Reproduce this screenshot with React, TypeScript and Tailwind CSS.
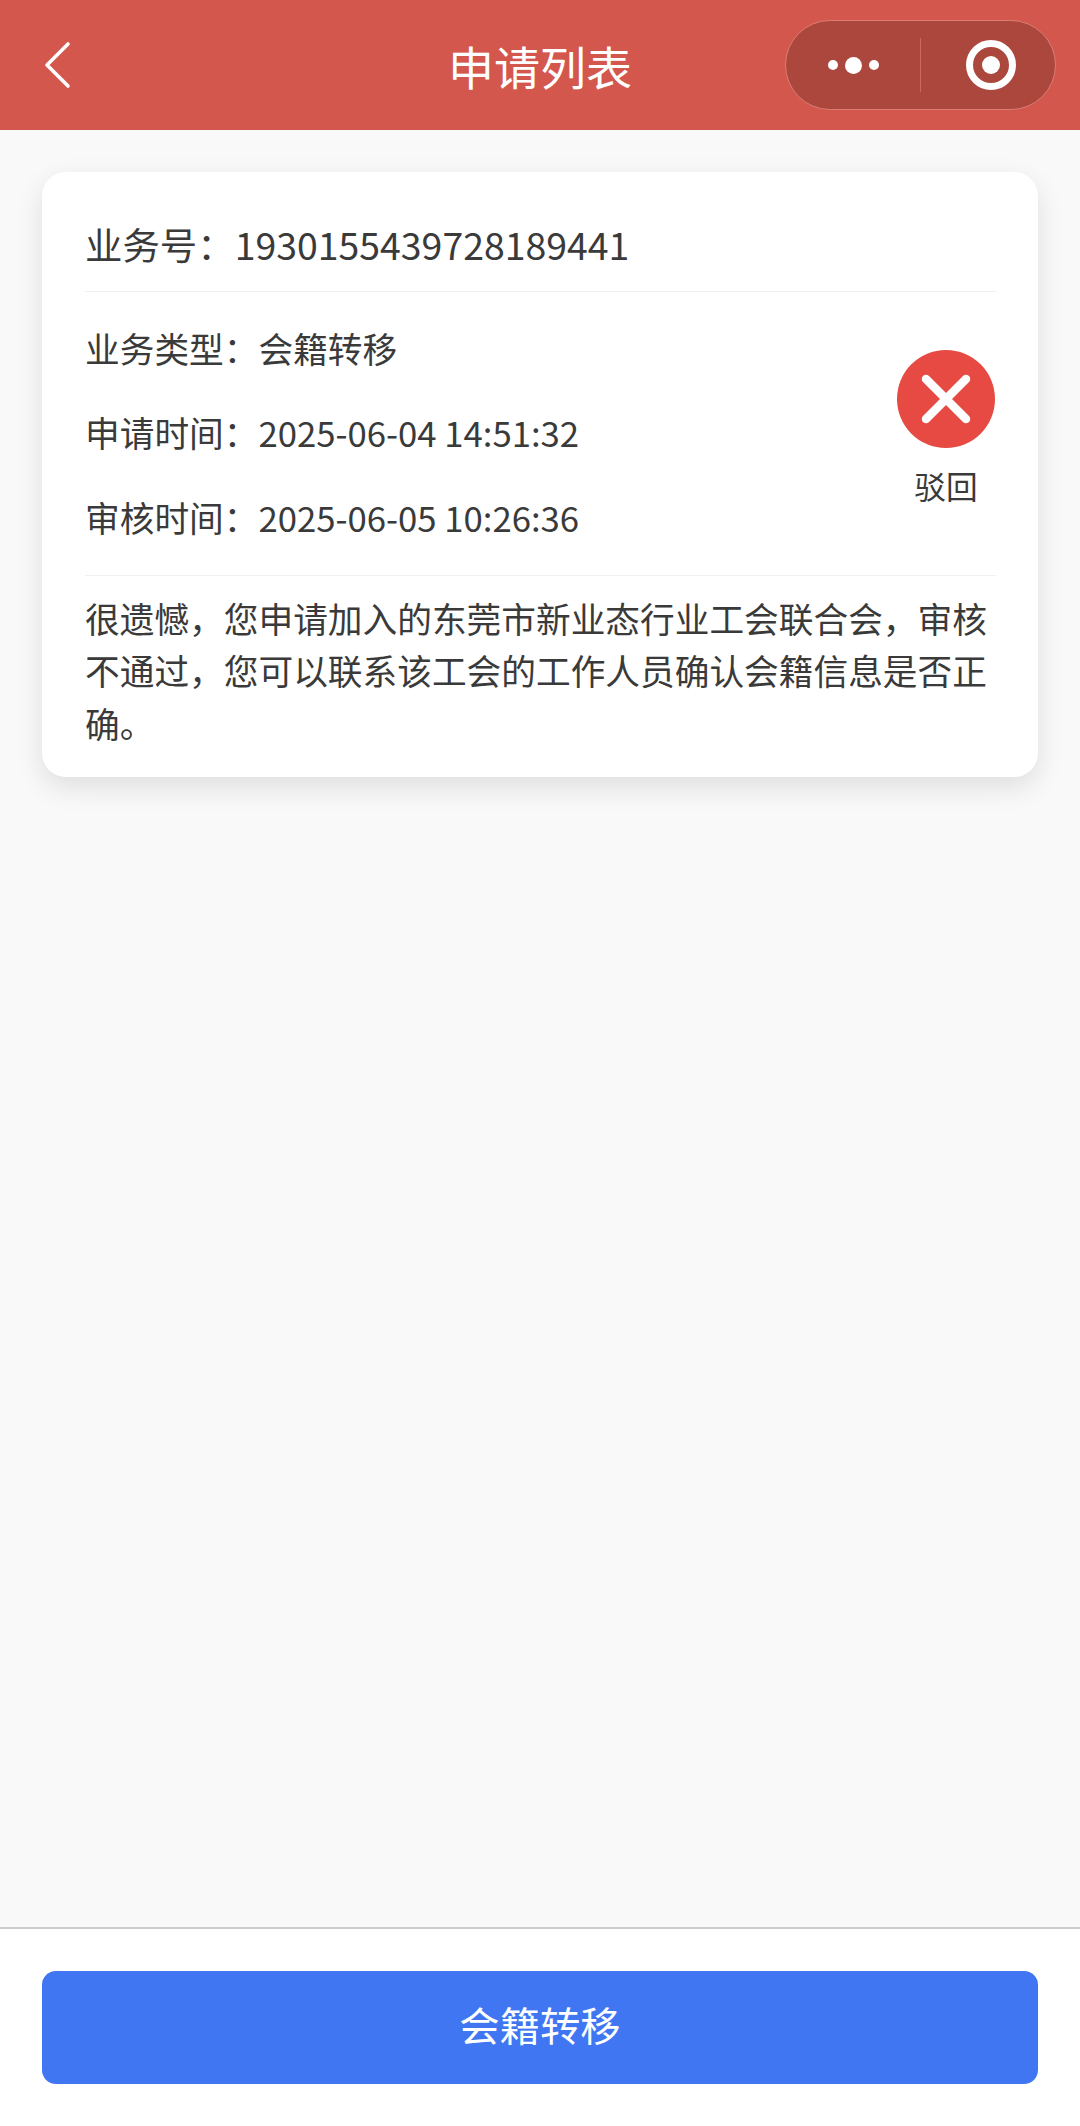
const font = 'font-["Noto_Sans_CJK_SC","Noto_Sans",sans-serif]';

function Row({ label, value }: { label: string; value: string }) {
  return (
    <div className="h-[84.7px] leading-[84.7px] text-[34.7px] whitespace-nowrap">
      {label}：{value}
    </div>
  );
}

export default function App() {
  return (
    <div className={`${font} h-[2126px] w-[1080px] flex flex-col bg-[#f9f9f9] text-[#3a3a3a] overflow-hidden`}>
      {/* nav bar */}
      <header className="h-[130px] shrink-0 bg-[#d4574e] grid grid-cols-[1fr_auto_1fr] items-center">
        <div className="pl-[43px]">
          <svg width="28" height="48" viewBox="0 0 28 48" fill="none" stroke="#ffffff" strokeWidth="3.6" strokeLinecap="round" strokeLinejoin="round">
            <path d="M25 3 L4 24 L25 45" />
          </svg>
        </div>
        <div className="text-[46px] leading-[60px] text-white">申请列表</div>
        <div className="flex justify-end pr-[24px]">
          <div className="h-[90px] w-[271px] rounded-full bg-[#ab473d] border border-[#dc7d74] flex items-center">
            <div className="w-[134px] flex items-center justify-center gap-[7px]">
              <span className="w-[10px] h-[10px] rounded-full bg-white" />
              <span className="w-[17px] h-[17px] rounded-full bg-white" />
              <span className="w-[10px] h-[10px] rounded-full bg-white" />
            </div>
            <div className="w-px h-[54px] bg-[#c96a60]" />
            <div className="flex-1 flex items-center justify-center pl-[5px]">
              <div className="w-[50px] h-[50px] rounded-full border-[7px] border-white flex items-center justify-center">
                <span className="w-[18px] h-[18px] rounded-full bg-white" />
              </div>
            </div>
          </div>
        </div>
      </header>

      {/* list */}
      <main className="flex-1 px-[42px] pt-[42px]">
        <div className="h-[605px] rounded-[24px] bg-white shadow-[0_10px_28px_rgba(0,0,0,0.11)] pl-[43px] pr-[42px]">
          <div className="h-[120px] pt-[50px] border-b border-[#f0f0f0] text-[37.44px] leading-[44px] whitespace-nowrap">
            业务号：1930155439728189441
          </div>
          <div className="h-[284px] pt-[13.5px] border-b border-[#f0f0f0] flex justify-between">
            <div>
              <Row label="业务类型" value="会籍转移" />
              <Row label="申请时间" value="2025-06-04 14:51:32" />
              <Row label="审核时间" value="2025-06-05 10:26:36" />
            </div>
            <div className="w-[98px] mr-px mt-[44.5px] flex flex-col items-center">
              <div className="w-[98px] h-[98px] rounded-full bg-[#e64a42] flex items-center justify-center">
                <svg width="56" height="56" viewBox="0 0 56 56" fill="none" stroke="#ffffff" strokeWidth="8.5" strokeLinecap="round">
                  <path d="M8 8 L48 48 M48 8 L8 48" />
                </svg>
              </div>
              <div className="mt-[17px] text-[31.68px] leading-[40px] whitespace-nowrap">驳回</div>
            </div>
          </div>
          <p className="pt-[15.5px] text-[34.7px] leading-[52.8px]">
            很遗憾，您申请加入的东莞市新业态行业工会联合会，审核不通过，您可以联系该工会的工作人员确认会籍信息是否正确。
          </p>
        </div>
      </main>

      {/* bottom action */}
      <footer className="h-[199px] shrink-0 bg-white border-t-2 border-[#cccccc] px-[42px] pt-[42px]">
        <div className="h-[113px] pb-[7px] rounded-[14px] bg-[#4176f3] flex items-center justify-center text-[40.32px] text-white">
          会籍转移
        </div>
      </footer>
    </div>
  );
}
